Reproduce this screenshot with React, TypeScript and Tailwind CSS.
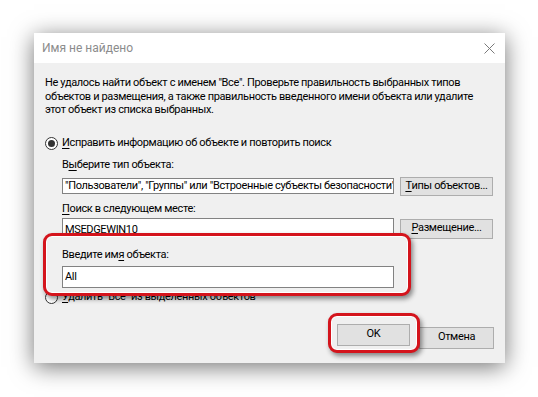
import React from 'react'

const font = { fontFamily: 'Roboto, "Noto Sans", Arial, sans-serif' }

function Radio({ checked }: { checked?: boolean }) {
  return (
    <span className="inline-flex h-[13px] w-[13px] shrink-0 items-center justify-center rounded-full border border-[#333] bg-white">
      {checked ? <span className="h-[7px] w-[7px] rounded-full bg-[#333]" /> : null}
    </span>
  )
}

function Btn({ children, className }: { children: React.ReactNode; className?: string }) {
  return (
    <div
      className={
        'flex items-center justify-center whitespace-nowrap border border-[#adadad] bg-[#e1e1e1] text-black ' +
        (className ?? '')
      }
    >
      {children}
    </div>
  )
}

function U({ children }: { children: React.ReactNode }) {
  return <span className="underline decoration-1 underline-offset-[2px]">{children}</span>
}

export default function App() {
  return (
    <div className="h-[397px] w-[538px] bg-white pl-[34px] pt-[33px]" style={font}>
      <div className="flex h-[330px] w-[471px] flex-col shadow-[0_4px_22px_rgba(0,0,0,0.55)]">
        {/* title bar */}
        <div className="flex h-[30px] items-center justify-between bg-white pl-[8px] pr-[10px]">
          <span className="text-[12px] text-[#8c8c8c]">Имя не найдено</span>
          <svg width="11" height="11" viewBox="0 0 11 11">
            <path d="M0.5 0.5 L10.5 10.5 M10.5 0.5 L0.5 10.5" stroke="#7a7a7a" strokeWidth="1" />
          </svg>
        </div>

        {/* body */}
        <div className="flex flex-1 flex-col bg-[#f0f0f0] pl-[11px] pr-[11px] pt-[13px] text-[11px] tracking-[-0.35px] text-black">
          <p className="whitespace-nowrap leading-[13.5px]">
            Не удалось найти объект с именем "Все". Проверьте правильность выбранных типов
            <br />
            объектов и размещения, а также правильность введенного имени объекта или удалите
            <br />
            этот объект из списка выбранных.
          </p>

          <div className="mt-[19px] flex h-[16px] items-center gap-[4px]">
            <Radio checked />
            <span>
              <U>И</U>справить информацию об объекте и повторить поиск
            </span>
          </div>

          <div className="pl-[17px]">
            <div className="mt-[6px] h-[14px] leading-[14px]">
              В<U>ы</U>берите тип объекта:
            </div>
            <div className="mt-[5px] flex h-[19px] items-center gap-[6px]">
              <div className="h-[16px] w-[332px] overflow-hidden whitespace-nowrap border border-[#828282] bg-white pl-[2px] leading-[14px]">
                "Пользователи", "Группы" или "Встроенные субъекты безопасности"
              </div>
              <Btn className="h-[19px] w-[93px]">
                <U>Т</U>ипы объектов...
              </Btn>
            </div>

            <div className="mt-[6px] h-[14px] leading-[14px]">
              <U>П</U>оиск в следующем месте:
            </div>
            <div className="mt-[2px] flex items-start gap-[6px]">
              <div className="h-[23px] w-[332px] overflow-hidden border border-[#828282] bg-white pl-[2px] pt-[4px] leading-[14px]">
                MSEDGEWIN10
              </div>
              <Btn className="mt-[1px] h-[20px] w-[93px]">
                <U>Р</U>азмещение...
              </Btn>
            </div>

            {/* highlighted callout */}
            <div className="relative z-10 -ml-[19px] -mt-[8px] h-[63px] w-[368px] rounded-[9px] border-[3px] border-[#d4141c] bg-[#f0f0f0] pl-[16px] pt-[12px] shadow-[2px_3px_5px_rgba(0,0,0,0.45),inset_0_0_0_1px_#ffffff]">
              <div className="h-[14px] leading-[14px]">
                Введите им<U>я</U> объекта:
              </div>
              <div className="mt-[4px] h-[22px] w-[332px] border border-[#828282] bg-white pl-[2px] pt-[3px] leading-[14px]">
                All
              </div>
            </div>
          </div>

          <div className="-mt-[6px] flex h-[16px] items-center gap-[4px]">
            <Radio />
            <span>
              <U>У</U>далить "Все" из выделенных объектов
            </span>
          </div>

          <div className="mt-[7px] flex items-start justify-end">
            <div className="relative z-10 -mr-[1px] h-[40px] w-[92px] rounded-[9px] border-[3px] border-[#d4141c] bg-[#f0f0f0] pl-[6px] pt-[8px] shadow-[2px_3px_5px_rgba(0,0,0,0.45),inset_0_0_0_1px_#ffffff]">
              <Btn className="h-[22px] w-[73px]">OK</Btn>
            </div>
            <Btn className="mt-[14px] h-[22px] w-[75px]">Отмена</Btn>
          </div>
        </div>
      </div>
    </div>
  )
}
